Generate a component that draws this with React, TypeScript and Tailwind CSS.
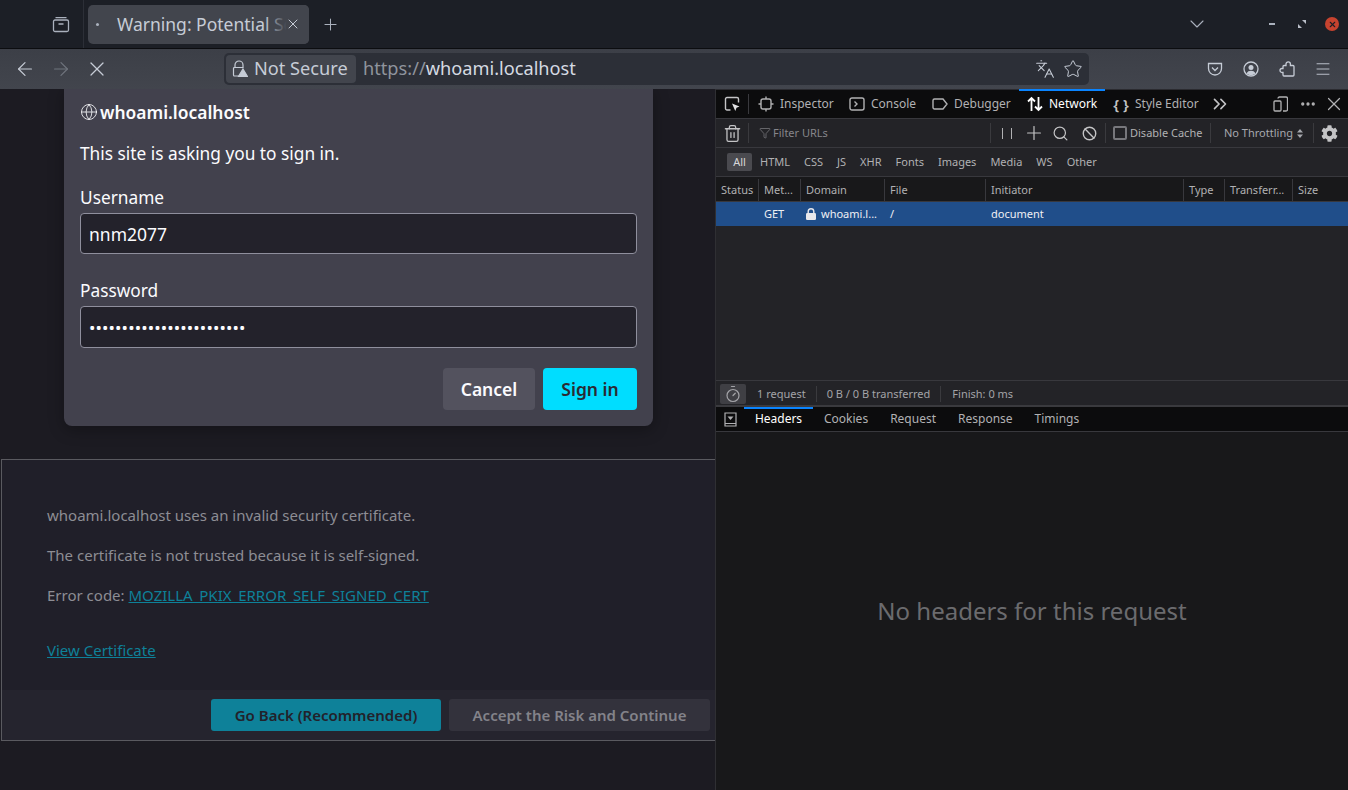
import { ReactNode } from 'react';
import { ArrowLeft, ArrowRight, ChevronDown, Globe, Languages, Plus, Search, Star, X, Menu, Ban, Trash2, Funnel, ChevronsRight, Timer, Ellipsis } from 'lucide-react';
import { FaCog } from 'react-icons/fa';

function Sep() {
  return <div className="w-px h-[20px] bg-[#3a3a3e] shrink-0" />;
}

function DevTab({ icon, label, active, w }: { icon: ReactNode; label: string; active?: boolean; w: string }) {
  return (
    <div className={`relative h-full flex items-center gap-[6px] pl-[8px] shrink-0 ${w} ${active ? 'text-white' : 'text-[#b1b1b3]'}`}>
      {active && <div className="absolute top-[-1px] left-0 right-0 h-[2px] bg-[#0a84ff]" />}
      {icon}
      <span>{label}</span>
    </div>
  );
}

const columns = [
  { label: 'Status', w: 'w-[43px]' },
  { label: 'Met...', w: 'w-[42px]' },
  { label: 'Domain', w: 'w-[84px]' },
  { label: 'File', w: 'w-[101px]' },
  { label: 'Initiator', w: 'w-[198px]' },
  { label: 'Type', w: 'w-[41px]' },
  { label: 'Transferr...', w: 'w-[68px]' },
  { label: 'Size', w: 'flex-1' },
];

function TabStrip() {
  return (
    <div className="h-[49px] bg-[#1c1f26] border-b border-[#0c0d10] flex items-center text-[#c6ccd6]">
      <div className="w-[84px] h-[48px] flex items-center justify-end pr-[13px] border-r border-[#2c2f37] shrink-0">
        <svg width="18" height="18" viewBox="0 0 18 18" fill="none" stroke="#aab1bd" strokeWidth="1.3">
          <rect x="1.5" y="5" width="15" height="11.5" rx="1.5" />
          <path d="M3.5 2.7h11M6.5 9h5" />
        </svg>
      </div>
      <div className="ml-[4px] w-[221px] h-[39px] rounded-[5px] bg-[#42454d] flex items-center pl-[8px] relative overflow-hidden shrink-0">
        <span className="w-[3px] h-[3px] rounded-full bg-[#aab1bd] mr-[18px] shrink-0" />
        <span className="text-[17.5px] whitespace-nowrap">Warning: Potential Security Risk</span>
        <div className="absolute right-0 top-0 bottom-0 w-[45px] bg-gradient-to-r from-transparent via-[#42454d] to-[#42454d] flex items-center justify-end pr-[8px]">
          <X size={16} strokeWidth={1.5} />
        </div>
      </div>
      <Plus size={19} strokeWidth={1.3} className="ml-[12px] text-[#aab1bd]" />
      <div className="flex-1" />
      <ChevronDown size={24} strokeWidth={1.1} className="text-[#aab1bd] mr-[60px]" />
      <div className="w-[6px] h-[2px] bg-[#aab1bd] mr-[23px]" />
      <svg width="8" height="8" viewBox="0 0 8 8" className="mr-[19px]"><path d="M4 0h4v4zM0 4l4 4H0z" fill="#b9bec8" /></svg>
      <div className="w-[14px] h-[14px] rounded-full bg-[#c7432f] flex items-center justify-center mr-[9px]">
        <X size={9} strokeWidth={3} className="text-[#1c1f26]" />
      </div>
    </div>
  );
}

function NavBar() {
  return (
    <div className="h-[40px] bg-gradient-to-b from-[#3c3f47] to-[#42454d] flex items-center text-[#c6ccd6]">
      <ArrowLeft size={22} strokeWidth={1.3} className="ml-[14px]" />
      <ArrowRight size={22} strokeWidth={1.3} className="ml-[14px] text-[#6f747d]" />
      <X size={24} strokeWidth={1.2} className="ml-[13px]" />
      <div className="ml-[115px] w-[865px] h-[32px] rounded-[5px] bg-[#2c2f37] flex items-center pl-[2px]">
        <div className="h-[28px] w-[130px] rounded-[4px] bg-[#42454d] flex items-center pl-[6px] gap-[6px] text-[18.2px] whitespace-nowrap">
          <svg width="16" height="18" viewBox="0 0 16 18" fill="none" stroke="#c6ccd6" strokeWidth="1.2" className="shrink-0">
            <path d="M3 7.5V5a4 4 0 0 1 8 0v2.5" />
            <path d="M7 16H2.5A1 1 0 0 1 1.5 15V8.5a1 1 0 0 1 1-1h9" />
            <path d="M11 9l4.5 7.5h-9z" fill="#c6ccd6" />
          </svg>
          Not Secure
        </div>
        <div className="ml-[7px] text-[18.2px] text-[#8f949d] whitespace-nowrap">
          https://<span className="text-[#d5dae2]">whoami.localhost</span>
        </div>
        <div className="flex-1" />
        <Languages size={20} strokeWidth={1.3} className="mr-[8px]" />
        <Star size={20} strokeWidth={1.2} className="mr-[6px]" />
      </div>
      <div className="flex-1" />
      <svg width="16" height="16" viewBox="0 0 16 16" fill="none" stroke="#c6ccd6" strokeWidth="1.3" className="mr-[20px]">
        <path d="M1.5 2.5h13v5a6.5 6.5 0 0 1-13 0z" />
        <path d="M5 6.5l3 3 3-3" />
      </svg>
      <svg width="16" height="16" viewBox="0 0 16 16" fill="none" stroke="#c6ccd6" strokeWidth="1.3" className="mr-[20px]">
        <circle cx="8" cy="8" r="7" />
        <circle cx="8" cy="6.500" r="2.500" fill="#c6ccd6" stroke="none" />
        <path d="M3.500 12.500c1-2 2.500-2.700 4.500-2.700s3.500.7 4.500 2.700a6.500 6.500 0 0 1-9 0z" fill="#c6ccd6" stroke="none" />
      </svg>
      <svg width="16" height="16" viewBox="0 0 16 16" fill="none" stroke="#c6ccd6" strokeWidth="1.3" className="mr-[19px]">
        <path d="M7 4.500V3a2.200 2.200 0 0 1 4.400 0v1.500H14a1 1 0 0 1 1 1V14a1 1 0 0 1-1 1H5a1 1 0 0 1-1-1v-2.500H3a2 2 0 0 1 0-4h1v-2a1 1 0 0 1 1-1z" />
      </svg>
      <Menu size={18} strokeWidth={1.2} className="mr-[16px]" />
    </div>
  );
}

function Dialog() {
  return (
    <div className="absolute left-[64px] top-[-2px] w-[589px] h-[339px] bg-[#42414d] rounded-b-[8px] shadow-[0_4px_16px_rgba(0,0,0,0.3)] px-[16px] text-[#fbfbfe]">
      <div className="flex items-center gap-[2px] h-[20px] mt-[15px] text-[17.4px] font-semibold">
        <Globe size={18} strokeWidth={1.1} />
        whoami.localhost
      </div>
      <div className="mt-[22px] text-[17.3px] leading-[20px]">This site is asking you to sign in.</div>
      <div className="mt-[24px] text-[17.3px] leading-[20px]">Username</div>
      <div className="mt-[5px] h-[41px] pt-[2px] rounded-[4px] bg-[#23222b] border border-[#8f8f9d] flex items-center px-[8px] text-[17.5px]">nnm2077</div>
      <div className="mt-[27px] text-[17.3px] leading-[20px]">Password</div>
      <div className="mt-[5px] h-[42px] pt-[2px] rounded-[4px] bg-[#23222b] border border-[#8f8f9d] flex items-center px-[8px] text-[17px] tracking-[0.13px]">
        ••••••••••••••••••••••••
      </div>
      <div className="mt-[20px] flex justify-end gap-[8px]">
        <div className="w-[92px] h-[42px] rounded-[4px] bg-[#53525e] flex items-center justify-center text-[17.5px] font-semibold">Cancel</div>
        <div className="w-[94px] h-[42px] rounded-[4px] bg-[#00ddff] flex items-center justify-center text-[17.5px] font-semibold text-[#2b2a33]">Sign in</div>
      </div>
    </div>
  );
}

function ErrorPage() {
  return (
    <div className="relative w-[716px] shrink-0 bg-[#1c1b22] border-r border-[#2f2f33] overflow-hidden pt-[370px] pl-[1px]">
      <Dialog />
      <div className="h-[282px] bg-[#201f29] border border-r-0 border-[#5a5a60] flex flex-col text-[15px] text-[#8d8d94]">
        <div className="flex-1 pl-[45px] pt-[45px]">
          <div className="leading-[20px]">whoami.localhost uses an invalid security certificate.</div>
          <div className="mt-[20px] leading-[20px]">The certificate is not trusted because it is self-signed.</div>
          <div className="mt-[20px] leading-[20px]">
            Error code: <span className="text-[#0e8199] underline">MOZILLA_PKIX_ERROR_SELF_SIGNED_CERT</span>
          </div>
          <div className="mt-[35px] leading-[20px] text-[#0e8199] underline">View Certificate</div>
        </div>
        <div className="h-[50px] bg-[#25242e] flex items-start justify-end gap-[8px] pt-[9px] pr-[5px] font-semibold">
          <div className="w-[230px] h-[32px] pt-[1px] rounded-[3px] bg-[#0e8199] text-[#22222b] flex items-center justify-center">Go Back (Recommended)</div>
          <div className="w-[261px] h-[32px] pt-[1px] rounded-[3px] bg-[#33323c] text-[#83838a] flex items-center justify-center">Accept the Risk and Continue</div>
        </div>
      </div>
    </div>
  );
}

function DevTools() {
  return (
    <div className="flex-1 flex flex-col min-w-0 bg-[#232327] text-[12px] text-[#b1b1b3]">
      <div className="h-[30px] bg-[#0c0c0d] border-b border-[#38383d] flex items-center shrink-0 border-t border-t-[#2b2b30]">
        <div className="w-[32px] flex items-center justify-center shrink-0">
          <svg width="17" height="17" viewBox="0 0 17 17" fill="none" stroke="#c4c4c6" strokeWidth="1.4">
            <path d="M6.5 14H3a1.5 1.5 0 0 1-1.5-1.5V3A1.5 1.5 0 0 1 3 1.5h10A1.5 1.5 0 0 1 14.500 3v3.500" />
            <path d="M8 7.500l7.500 3-3 1.200-1.200 3.300z" fill="#e4e4e6" stroke="none" />
          </svg>
        </div>
        <Sep />
        <div className="h-full flex items-center ml-px">
          <DevTab w="w-[91px]" label="Inspector" icon={
            <svg width="16" height="16" viewBox="0 0 16 16" fill="none" stroke="#b1b1b3" strokeWidth="1.4"><rect x="3" y="3" width="10" height="10" rx="2" /><path d="M8 .5V3M8 13v2.500M.5 8H3M13 8h2.500" /></svg>
          } />
          <DevTab w="w-[83px]" label="Console" icon={
            <svg width="16" height="14" viewBox="0 0 16 14" fill="none" stroke="#b1b1b3" strokeWidth="1.4"><rect x="1" y="1" width="14" height="12" rx="2" /><path d="M5.500 4.500L8 7 5.500 9.500" /></svg>
          } />
          <DevTab w="w-[95px]" label="Debugger" icon={
            <svg width="16" height="12" viewBox="0 0 16 12" fill="none" stroke="#b1b1b3" strokeWidth="1.4"><path d="M2.500 1H11l4 5-4 5H2.500A1.500 1.500 0 0 1 1 9.500v-7A1.500 1.500 0 0 1 2.500 1z" /></svg>
          } />
          <DevTab w="w-[86px]" active label="Network" icon={
            <svg width="16" height="16" viewBox="0 0 16 16" fill="none" stroke="#ffffff" strokeWidth="1.8"><path d="M4.500 15V2M1 5.500L4.500 2 8 5.500M11.500 1v13M8 10.500l3.500 3.500 3.500-3.500" /></svg>
          } />
          <DevTab w="w-[100px]" label="Style Editor" icon={
            <span className="w-[16px] text-center text-[15px] font-semibold text-[#c4c4c6] leading-none whitespace-nowrap">{'{ }'}</span>
          } />
          <ChevronsRight size={22} strokeWidth={1.8} className="ml-[4px] text-[#c4c4c6]" />
        </div>
        <div className="flex-1" />
        <svg width="15" height="16" viewBox="0 0 15 16" fill="none" stroke="#b1b1b3" strokeWidth="1.3" className="mr-[11px]">
          <rect x="1" y="5" width="7" height="10" rx="1" /><path d="M5 2.500A1.500 1.500 0 0 1 6.500 1H13a1.500 1.500 0 0 1 1.500 1.500v11A1.500 1.500 0 0 1 13 15h-3" />
        </svg>
        <Ellipsis size={18} strokeWidth={2.4} className="mr-[6px] text-[#b1b1b3]" />
        <X size={22} strokeWidth={1.3} className="mr-[3px] text-[#b1b1b3]" />
      </div>

      <div className="h-[29px] flex items-center border-b border-[#38383d] shrink-0">
        <Trash2 size={19} strokeWidth={1.6} className="ml-[7px] mr-[6px] text-[#c4c4c6] shrink-0" />
        <Sep />
        <Funnel size={12} strokeWidth={1.3} className="ml-[10px] text-[#8a8a8e] shrink-0" />
        <span className="ml-[2px] text-[#86868a] text-[11px] w-[217px]">Filter URLs</span>
        <Sep />
        <span className="ml-[11px] w-[10px] h-[11px] border-x border-[#b1b1b3] shrink-0" />
        <Plus size={22} strokeWidth={1.3} className="ml-[11px] text-[#c4c4c6] shrink-0" />
        <Search size={17} strokeWidth={1.7} className="ml-[7px] text-[#c4c4c6] shrink-0" />
        <Ban size={15} strokeWidth={2.2} className="ml-[13px] mr-[8px] text-[#c4c4c6] shrink-0" />
        <Sep />
        <span className="ml-[7px] w-[14px] h-[14px] rounded-[2px] border-2 border-[#77777c] shrink-0" />
        <span className="ml-[3px] text-[11px] w-[80px] whitespace-nowrap">Disable Cache</span>
        <Sep />
        <span className="ml-[13px] text-[11px] w-[89px] whitespace-nowrap text-[#a6a8ae] flex items-center">
          No Throttling
          <svg width="6" height="9" viewBox="0 0 6 9" className="ml-[4px]"><path d="M3 0l3 3.500H0zM3 9L0 5.500h6z" fill="#a6a8ae" /></svg>
        </span>
        <Sep />
        <FaCog size={17} className="ml-[7px] text-[#c4c4c6] shrink-0" />
      </div>

      <div className="h-[29px] flex items-center gap-[14px] pl-[11px] border-b border-[#38383d] shrink-0 text-[11px]">
        <span className="w-[25px] h-[18px] -mr-[6px] rounded-[2px] bg-[#4a4a4f] text-[#d7d7d9] flex items-center justify-center">All</span>
        <span>HTML</span><span>CSS</span><span>JS</span><span>XHR</span><span>Fonts</span><span>Images</span><span>Media</span><span>WS</span><span>Other</span>
      </div>

      <div className="h-[25px] pt-[2px] bg-[#18181a] border-b border-[#38383d] flex shrink-0 text-[11px]">
        {columns.map((c) => (
          <div key={c.label} className={`${c.w} h-full flex items-center pl-[5px] border-r border-[#38383d] last:border-r-0 whitespace-nowrap`}>{c.label}</div>
        ))}
      </div>
      <div className="h-[24px] bg-[#204e8a] flex shrink-0 text-[11px] text-[#f0f0f4] items-center">
        <div className="w-[43px]" />
        <div className="w-[42px] pl-[5px]">GET</div>
        <div className="w-[84px] pl-[5px] flex items-center gap-[5px]">
          <svg width="10" height="12" viewBox="0 0 10 12" fill="none" className="shrink-0">
            <path d="M2.200 6V3.500a2.800 2.800 0 0 1 5.600 0V6" stroke="#e8e8ec" strokeWidth="1.400" />
            <rect x="0" y="5" width="10" height="7" rx="1.200" fill="#e8e8ec" />
          </svg>
          whoami.l...
        </div>
        <div className="w-[101px] pl-[5px]">/</div>
        <div className="w-[198px] pl-[5px]">document</div>
      </div>
      <div className="flex-1" />

      <div className="h-[25px] pt-[2px] border-t border-[#38383d] flex items-center shrink-0 text-[11px] text-[#a4a4a8]">
        <div className="ml-[4px] w-[26px] h-[20px] rounded-[2px] bg-[#3f3f44] flex items-center justify-center"><Timer size={18} strokeWidth={1.6} className="text-[#a4a4a8]" /></div>
        <span className="ml-[11px] mr-[10px]">1 request</span>
        <div className="w-px h-[16px] bg-[#3a3a3e]" />
        <span className="ml-[10px] mr-[10px]">0 B / 0 B transferred</span>
        <div className="w-px h-[16px] bg-[#3a3a3e]" />
        <span className="ml-[11px]">Finish: 0 ms</span>
      </div>

      <div className="h-[27px] bg-[#0c0c0d] border-t-2 border-[#3a3a3e] border-b border-b-[#38383d] flex items-center shrink-0">
        <div className="w-[28px] flex justify-center">
          <svg width="13" height="15" viewBox="0 0 13 15" fill="none" stroke="#b1b1b3" strokeWidth="1.200"><path d="M1 1h11v13H1zM1 11.500h11" /><path d="M3.500 4.500h6L6.500 8z" fill="#b1b1b3" stroke="none" /></svg>
        </div>
        <div className="relative w-[69px] h-full flex items-center justify-center text-white">
          <div className="absolute top-0 left-0 right-0 h-[2px] bg-[#0a84ff]" />
          Headers
        </div>
        <span className="ml-[11px]">Cookies</span>
        <span className="ml-[22px]">Request</span>
        <span className="ml-[22px]">Response</span>
        <span className="ml-[22px]">Timings</span>
      </div>

      <div className="h-[358px] shrink-0 bg-[#18181a] flex items-center justify-center text-[24px] text-[#6b6b6e]">
        No headers for this request
      </div>
    </div>
  );
}

export default function App() {
  return (
    <div className="w-[1348px] h-[790px] flex flex-col overflow-hidden font-['Noto_Sans',sans-serif] bg-[#1c1b22]">
      <TabStrip />
      <NavBar />
      <div className="flex-1 flex min-h-0">
        <ErrorPage />
        <DevTools />
      </div>
    </div>
  );
}
